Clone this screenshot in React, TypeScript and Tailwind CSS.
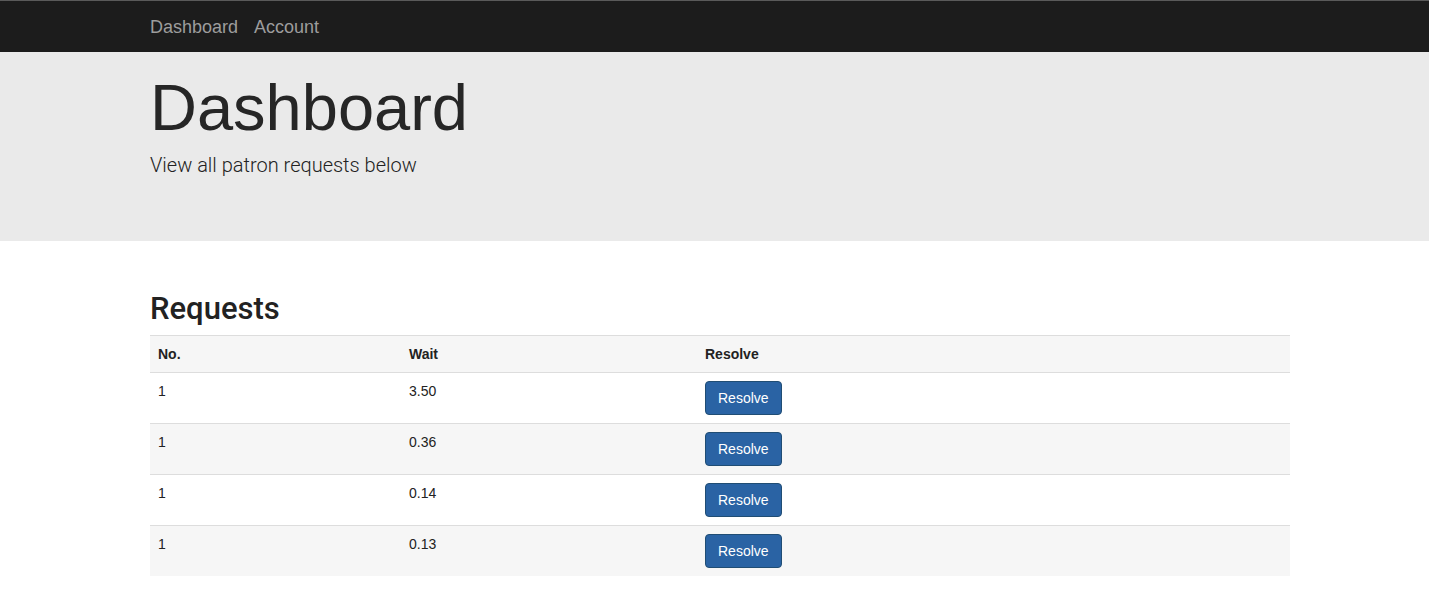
import React from "react";

const rows = [
  { no: "1", wait: "3.50" },
  { no: "1", wait: "0.36" },
  { no: "1", wait: "0.14" },
  { no: "1", wait: "0.13" },
];

export default function App() {
  return (
    <div className="min-h-[593px] bg-white text-[#333] font-['Liberation_Sans',Arial,sans-serif]">
      <nav className="h-[52px] bg-[#1c1c1c] border-t border-[#5a5a5a]">
        <div className="ml-[150px] w-[1140px] h-full flex items-center gap-4 text-[18px] text-[#9d9d9d]">
          <a className="leading-none">Dashboard</a>
          <a className="leading-none">Account</a>
        </div>
      </nav>
      <header className="h-[189px] bg-[#eaeaea]">
        <div className="ml-[150px] w-[1140px] pt-[20px]">
          <h1 className="text-[65px] leading-[1.1] text-[#262626] m-0">Dashboard</h1>
          <p className="mt-[7px] text-[20px] leading-[1.4] font-light text-[#222] font-['Roboto',sans-serif]">View all patron requests below</p>
        </div>
      </header>
      <main className="ml-[150px] w-[1140px]">
        <h2 className="mt-[51px] mb-[9px] text-[31px] leading-[1.1] font-medium text-[#222] font-['Roboto',sans-serif]">Requests</h2>
        <table className="w-full border-collapse text-[14px] leading-[20px] text-[#222]">
          <thead>
            <tr className="bg-[#f6f6f6] border-t border-b border-[#dddddd]">
              <th className="w-[251px] text-left font-bold p-2">No.</th>
              <th className="w-[296px] text-left font-bold p-2">Wait</th>
              <th className="text-left font-bold p-2">Resolve</th>
            </tr>
          </thead>
          <tbody>
            {rows.map((r, i) => (
              <tr key={i} className={`${i % 2 === 1 ? "bg-[#f6f6f6]" : "bg-white"} ${i > 0 ? "border-t border-[#dddddd]" : ""}`}>
                <td className="p-2 align-top">{r.no}</td>
                <td className="p-2 align-top">{r.wait}</td>
                <td className="p-2 align-top">
                  <button className="h-[34px] px-3 text-[14px] text-white bg-[#2a63a4] border border-[#204d74] rounded-[4px] leading-[20px]">
                    Resolve
                  </button>
                </td>
              </tr>
            ))}
          </tbody>
        </table>
      </main>
    </div>
  );
}
